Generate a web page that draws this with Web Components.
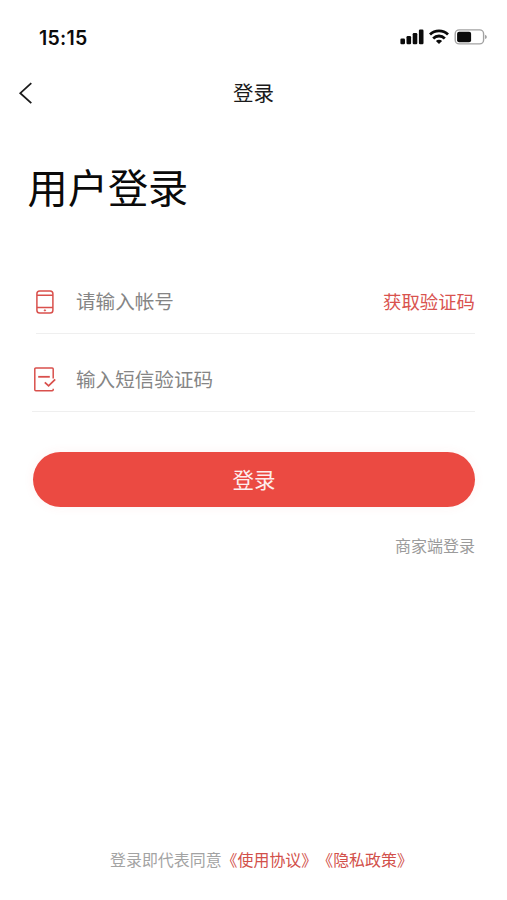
<!DOCTYPE html>
<html lang="zh-CN">
<head>
<meta charset="UTF-8">
<meta name="viewport" content="width=device-width, initial-scale=1.0">
<title>登录</title>
<style>
  body {
    margin: 0;
    background: #fff;
    font-family: "Noto Sans CJK SC", sans-serif;
  }
</style>
</head>
<body>
<login-page></login-page>

<script>
class StatusBar extends HTMLElement {
  constructor() {
    super();
    this.attachShadow({ mode: 'open' });
  }

  connectedCallback() {
    this.shadowRoot.innerHTML = `
      <style>
        :host {
          display: flex;
          justify-content: space-between;
          align-items: center;
          box-sizing: border-box;
          height: 74px;
          padding: 0 19px 0 39px;
          color: #0b0b0b;
        }

        .time {
          padding-top: 1px;
          font: 600 19.5px/24px Inter, sans-serif;
          letter-spacing: 0.25px;
        }

        svg {
          display: block;
        }
      </style>
      <span class="time"><slot></slot></span>
      <svg width="88" height="16" viewBox="0 0 88 16">
        <g fill="#0b0b0b">
          <rect x="0.4" y="9.6" width="4.6" height="5.6" rx="1.2"/>
          <rect x="6.5" y="7" width="4.6" height="8.2" rx="1.2"/>
          <rect x="12.7" y="4" width="4.6" height="11.2" rx="1.2"/>
          <rect x="18.9" y="0.6" width="4.6" height="14.6" rx="1.2"/>
        </g>
        <g fill="none" stroke="#0b0b0b" stroke-width="2.8">
          <path d="M30 5.6A12.8 12.8 0 0 1 48 5.6"/>
          <path d="M33.2 9.4A8.2 8.2 0 0 1 44.8 9.4"/>
        </g>
        <path d="M39 15L35.9 12A4.4 4.4 0 0 1 42.1 12Z" fill="#0b0b0b"/>
        <rect x="55.2" y="0.9" width="28.4" height="14" rx="4" fill="none" stroke="#a2a2a2" stroke-width="1.4"/>
        <rect x="57.1" y="2.8" width="14" height="10.4" rx="2" fill="#0b0b0b"/>
        <path d="M85 5.7Q86.9 6.4 86.9 7.9T85 10.1Z" fill="#a2a2a2"/>
      </svg>
    `;
  }
}

class NavBar extends HTMLElement {
  constructor() {
    super();
    this.attachShadow({ mode: 'open' });
  }

  connectedCallback() {
    this.shadowRoot.innerHTML = `
      <style>
        :host {
          display: grid;
          grid-template-columns: 40px 1fr 40px;
          align-items: center;
          height: 38px;
          color: #1a1a1a;
          font-size: 20.5px;
          line-height: 30px;
          text-align: center;
        }

        svg {
          display: block;
          margin-left: 18px;
        }

        span {
          padding-bottom: 2px;
        }
      </style>
      <svg width="16" height="24" viewBox="0 0 16 24" fill="none" stroke="#1a1a1a" stroke-width="1.8">
        <path d="M13.3 2.2L2.3 12.2L13.3 22.2"/>
      </svg>
      <span><slot></slot></span>
    `;
  }
}

class FieldRow extends HTMLElement {
  constructor() {
    super();
    this.attachShadow({ mode: 'open' });
  }

  connectedCallback() {
    this.shadowRoot.innerHTML = `
      <style>
        :host {
          display: flex;
          align-items: center;
          box-sizing: border-box;
          border-bottom: 1px solid #efefef;
          color: #858585;
          font-size: 19.6px;
          line-height: 28px;
        }

        .text {
          flex: 1;
          padding-bottom: 1px;
        }

        ::slotted(svg) {
          display: block;
        }

        ::slotted([slot="action"]) {
          padding-bottom: 2px;
          color: #d9534f;
          font-size: 18.4px;
        }
      </style>
      <slot name="icon"></slot>
      <span class="text"><slot></slot></span>
      <slot name="action"></slot>
    `;
  }
}

class SubmitButton extends HTMLElement {
  constructor() {
    super();
    this.attachShadow({ mode: 'open' });
  }

  connectedCallback() {
    this.shadowRoot.innerHTML = `
      <style>
        :host {
          display: block;
        }

        button {
          display: block;
          width: 100%;
          height: 55px;
          padding: 0 0 2px;
          border: none;
          border-radius: 28px;
          background: #eb4a42;
          box-shadow: 0 0 12px rgba(235, 74, 66, 0.06);
          color: #fdeeed;
          font-family: inherit;
          font-size: 21.5px;
          line-height: 53px;
          cursor: pointer;
        }
      </style>
      <button type="button"><slot></slot></button>
    `;
  }
}

class AgreementNote extends HTMLElement {
  constructor() {
    super();
    this.attachShadow({ mode: 'open' });
  }

  connectedCallback() {
    this.shadowRoot.innerHTML = `
      <style>
        :host {
          display: block;
          color: #a3a3a3;
          font-size: 15.95px;
          line-height: 24px;
          white-space: nowrap;
          text-spacing-trim: space-all;
        }

        ::slotted(span) {
          color: #d2504a;
        }
      </style>
      <slot></slot>
    `;
  }
}

class LoginPage extends HTMLElement {
  constructor() {
    super();
    this.attachShadow({ mode: 'open' });
  }

  connectedCallback() {
    this.shadowRoot.innerHTML = `
      <style>
        :host {
          display: flex;
          flex-direction: column;
          height: 900px;
          overflow: hidden;
        }

        h1 {
          margin: 44px 0 0 27.5px;
          color: #0a0a0a;
          font-size: 40.2px;
          font-weight: 400;
          line-height: 60px;
        }

        .account {
          height: 64px;
          margin: 54px 32px 0 36px;
        }

        .account svg {
          margin-right: 22px;
        }

        .code {
          height: 78px;
          margin: 0 32px 0 32px;
          padding-top: 13px;
        }

        .code svg {
          margin: 0 20px 0 2px;
        }

        submit-button {
          margin: 40px 32px 0 33px;
        }

        .merchant {
          align-self: flex-end;
          margin: 26px 32px 0 0;
          color: #9b9b9b;
          font-size: 16px;
          line-height: 24px;
        }

        agreement-note {
          margin: auto 0 29px 110px;
        }
      </style>
      <status-bar>15:15</status-bar>
      <nav-bar>登录</nav-bar>
      <h1>用户登录</h1>
      <field-row class="account">
        <svg slot="icon" width="18" height="24" viewBox="0 0 18 24" fill="none" stroke="#d9504c" stroke-width="1.5">
          <rect x="0.9" y="0.9" width="16" height="22.2" rx="2.8"/>
          <path d="M1 5.2H17M1 17.6H17"/>
          <circle cx="8.9" cy="20.4" r="0.7" fill="#d9504c" stroke-width="0.8"/>
        </svg>
        请输入帐号
        <span slot="action">获取验证码</span>
      </field-row>
      <field-row class="code">
        <svg slot="icon" width="22" height="25" viewBox="0 0 22 25" fill="none" stroke="#d9504c" stroke-width="1.5">
          <path d="M19.2 11.6V2Q19.2 1 18.2 1H1.8Q0.8 1 0.8 2V22.7Q0.8 23.7 1.8 23.7H18.2Q19.2 23.7 19.2 22.7V21.7"/>
          <path d="M4.2 9.8H15.8" stroke-width="1.8"/>
          <path d="M10.8 15.3L14.6 18.8L21.2 12.4" stroke-width="1.8"/>
        </svg>
        输入短信验证码
      </field-row>
      <submit-button>登录</submit-button>
      <span class="merchant">商家端登录</span>
      <agreement-note>登录即代表同意<span>《使用协议》</span><span>《隐私政策》</span></agreement-note>
    `;
  }
}

customElements.define('status-bar', StatusBar);
customElements.define('nav-bar', NavBar);
customElements.define('field-row', FieldRow);
customElements.define('submit-button', SubmitButton);
customElements.define('agreement-note', AgreementNote);
customElements.define('login-page', LoginPage);
</script>
</body>
</html>
